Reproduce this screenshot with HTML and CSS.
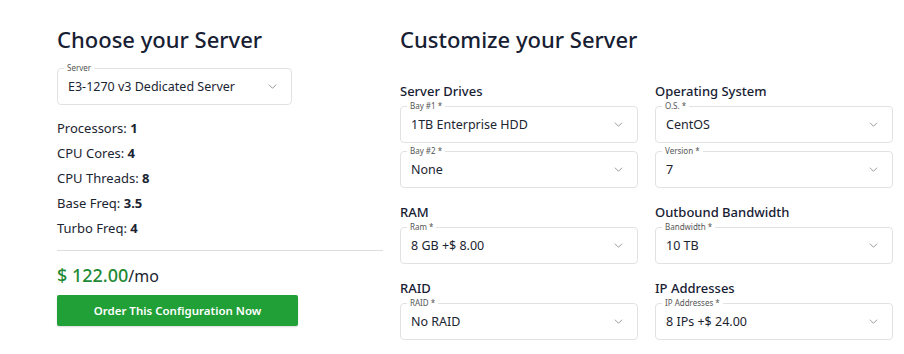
FILE: index.html
```html
<!DOCTYPE html>
<html>
<head>
    <meta charset="UTF-8">
    <title>Server Configurator</title>
    <link rel="stylesheet" href="styles.css">
</head>
<body>
    <div class="page">
        <!-- 左側：伺服器選擇 -->
        <div class="server-col">
            <h1 class="title">Choose your Server</h1>
            <div class="field server-field">
                <span class="field-label">Server</span>
                <span class="field-value">E3-1270 v3 Dedicated Server</span>
                <svg class="chevron" viewBox="0 0 12 7"><path d="M1 1l5 5 5-5"/></svg>
            </div>
            <ul class="specs">
                <li>Processors: <b>1</b></li>
                <li>CPU Cores: <b>4</b></li>
                <li>CPU Threads: <b>8</b></li>
                <li>Base Freq: <b>3.5</b></li>
                <li>Turbo Freq: <b>4</b></li>
            </ul>
            <div class="price"><span class="amount">$ 122.00</span>/mo</div>
            <button class="order-btn">Order This Configuration Now</button>
        </div>

        <!-- 右側：自訂設定 -->
        <div class="custom-col">
            <h1 class="title">Customize your Server</h1>
            <div class="options-grid">
                <div class="group">
                    <h2 class="group-title">Server Drives</h2>
                    <div class="field">
                        <span class="field-label">Bay #1 *</span>
                        <span class="field-value">1TB Enterprise HDD</span>
                        <svg class="chevron" viewBox="0 0 12 7"><path d="M1 1l5 5 5-5"/></svg>
                    </div>
                    <div class="field">
                        <span class="field-label">Bay #2 *</span>
                        <span class="field-value">None</span>
                        <svg class="chevron" viewBox="0 0 12 7"><path d="M1 1l5 5 5-5"/></svg>
                    </div>
                </div>
                <div class="group">
                    <h2 class="group-title">Operating System</h2>
                    <div class="field">
                        <span class="field-label">O.S. *</span>
                        <span class="field-value">CentOS</span>
                        <svg class="chevron" viewBox="0 0 12 7"><path d="M1 1l5 5 5-5"/></svg>
                    </div>
                    <div class="field">
                        <span class="field-label">Version *</span>
                        <span class="field-value">7</span>
                        <svg class="chevron" viewBox="0 0 12 7"><path d="M1 1l5 5 5-5"/></svg>
                    </div>
                </div>
                <div class="group">
                    <h2 class="group-title">RAM</h2>
                    <div class="field">
                        <span class="field-label">Ram *</span>
                        <span class="field-value">8 GB +$ 8.00</span>
                        <svg class="chevron" viewBox="0 0 12 7"><path d="M1 1l5 5 5-5"/></svg>
                    </div>
                </div>
                <div class="group">
                    <h2 class="group-title">Outbound Bandwidth</h2>
                    <div class="field">
                        <span class="field-label">Bandwidth *</span>
                        <span class="field-value">10 TB</span>
                        <svg class="chevron" viewBox="0 0 12 7"><path d="M1 1l5 5 5-5"/></svg>
                    </div>
                </div>
                <div class="group">
                    <h2 class="group-title">RAID</h2>
                    <div class="field">
                        <span class="field-label">RAID *</span>
                        <span class="field-value">No RAID</span>
                        <svg class="chevron" viewBox="0 0 12 7"><path d="M1 1l5 5 5-5"/></svg>
                    </div>
                </div>
                <div class="group">
                    <h2 class="group-title">IP Addresses</h2>
                    <div class="field">
                        <span class="field-label">IP Addresses *</span>
                        <span class="field-value">8 IPs +$ 24.00</span>
                        <svg class="chevron" viewBox="0 0 12 7"><path d="M1 1l5 5 5-5"/></svg>
                    </div>
                </div>
            </div>
        </div>
    </div>
</body>
</html>
```

FILE: styles.css
```css
* {
    margin: 0;
    padding: 0;
    box-sizing: border-box;
}

body {
    font-family: "Noto Sans", "Liberation Sans", sans-serif;
    background: #fff;
    color: #1b2431;
    overflow: hidden;
}

.page {
    display: flex;
    gap: 17px;
    padding: 24px 0 0 57px;
}

.title {
    font-size: 22px;
    font-weight: 500;
    line-height: 30px;
    color: #172033;
}

/* 左側欄 */
.server-col {
    width: 326px;
    display: flex;
    flex-direction: column;
}

.server-field {
    width: 235px;
    margin-top: 14px;
}

.specs {
    list-style: none;
    margin-top: 11px;
    padding-bottom: 9px;
    border-bottom: 1px solid #dedede;
}

.specs li {
    font-size: 13px;
    line-height: 25px;
    color: #1b2431;
}

.specs b {
    font-weight: 700;
}

.price {
    margin-top: 12px;
    font-size: 16px;
    line-height: 24px;
    color: #1b2431;
}

.price .amount {
    font-size: 18px;
    color: #1f8a34;
    font-weight: 500;
}

.order-btn {
    margin-top: 7px;
    width: 241px;
    height: 31px;
    background: #21a038;
    color: #fff;
    border: none;
    border-radius: 2px;
    font-family: inherit;
    font-size: 11.5px;
    font-weight: 600;
    cursor: pointer;
    box-shadow: 0 1px 2px rgba(0, 0, 0, 0.15);
}

/* 右側欄 */
.custom-col {
    width: 493px;
}

.options-grid {
    display: grid;
    grid-template-columns: 238px 238px;
    column-gap: 17px;
    row-gap: 15px;
    margin-top: 28px;
}

.group {
    display: flex;
    flex-direction: column;
    gap: 8px;
}

.group-title {
    font-size: 13px;
    font-weight: 500;
    line-height: 18px;
    color: #172033;
    margin-bottom: -2px;
}

/* 下拉欄位 */
.field {
    position: relative;
    height: 37px;
    border: 1px solid #e2e2e2;
    border-radius: 4px;
    display: flex;
    align-items: center;
    padding: 0 14px 0 10px;
}

.field-label {
    position: absolute;
    top: -6px;
    left: 6px;
    padding: 0 3px;
    background: #fff;
    font-size: 8px;
    line-height: 10px;
    color: #555;
}

.field-value {
    flex: 1;
    font-size: 12.5px;
    color: #1b2431;
}

.chevron {
    width: 9px;
    height: 5px;
    fill: none;
    stroke: #8a8a8a;
    stroke-width: 1.2;
}
```
